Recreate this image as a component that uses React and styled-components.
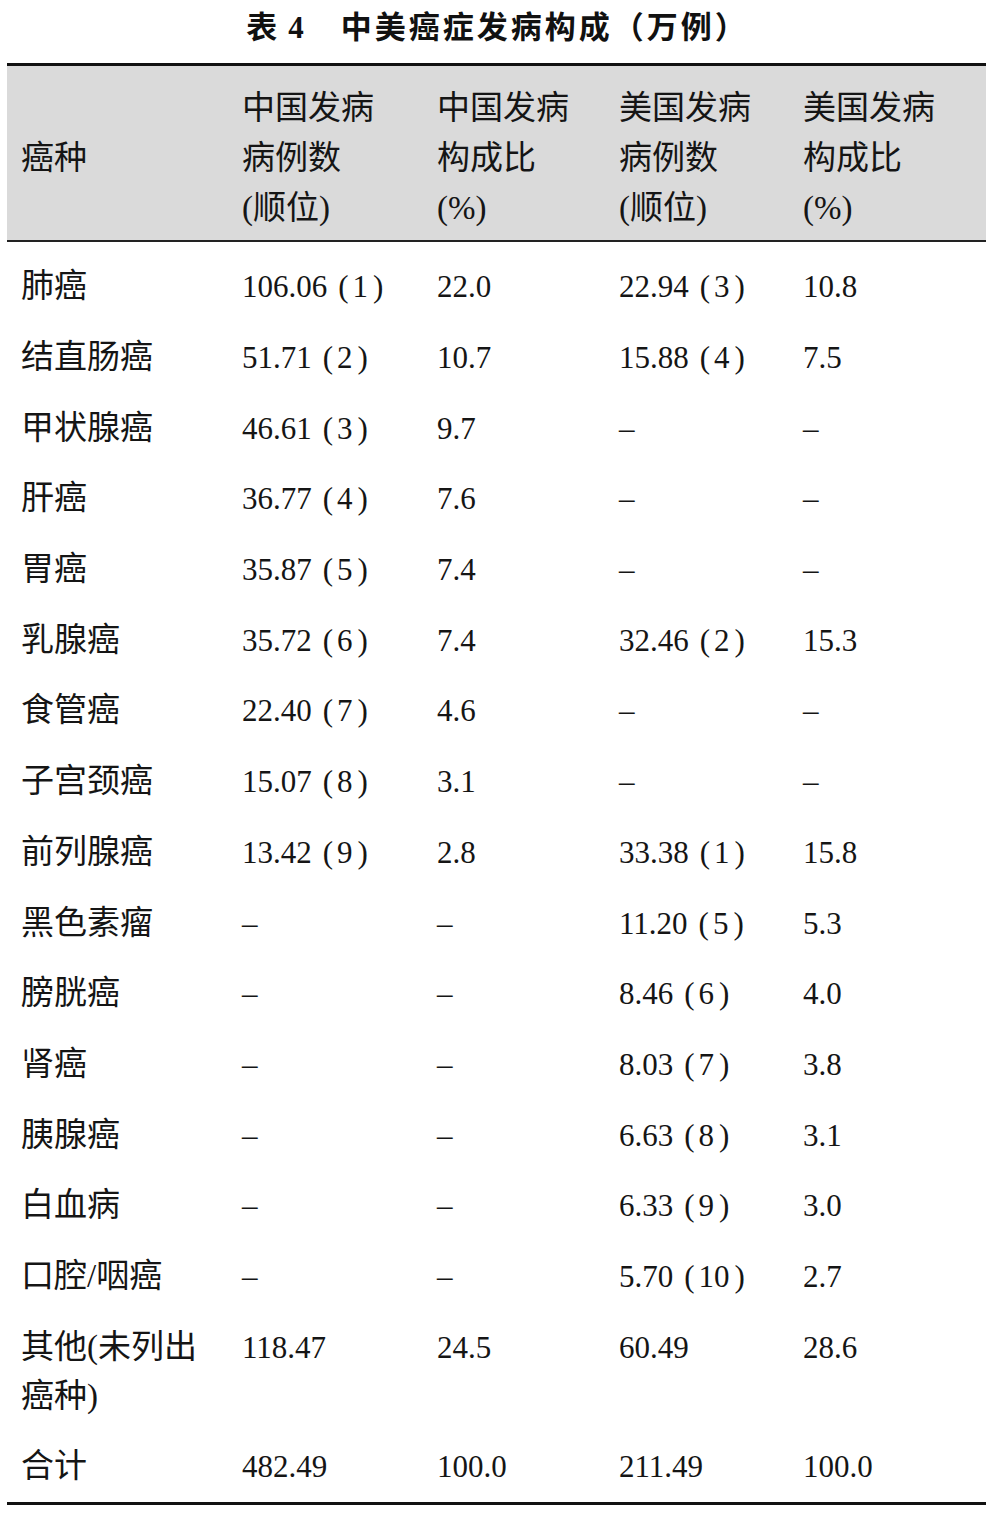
import styled, { createGlobalStyle } from 'styled-components';

const GlobalStyles = createGlobalStyle`
  body {
    margin: 0;
    background: #fff;
    color: #151515;
    font-family: "Liberation Serif", "Noto Sans CJK SC", serif;
  }
`;

const cols = '235px 195px 182px 184px 1fr';

const Page = styled.div`
  width: 979px;
  margin-left: 7px;
`;

const Title = styled.h1`
  margin: 0;
  height: 50px;
  line-height: 50px;
  text-align: center;
  font-family: "Noto Sans CJK SC", sans-serif;
  font-size: 31px;
  font-weight: 700;
  letter-spacing: 3px;
  color: #111;
  padding-left: 2px;
  b {
    font-family: "Liberation Serif", serif;
    margin: 0 34px 0 8px;
  }
`;

const Table = styled.div`
  margin-top: 13px;
  border-top: 3px solid #111;
  border-bottom: 3px solid #111;
`;

const Head = styled.div`
  display: grid;
  grid-template-columns: ${cols};
  background: #dadada;
  border-bottom: 2px solid #222;
  padding: 17px 0 7px;
`;

const HeadCell = styled.div`
  font-size: 33px;
  line-height: 50px;
  padding-left: ${p => (p.$first ? '14px' : '0')};
  align-self: ${p => (p.$first ? 'center' : 'start')};
  white-space: pre-line;
`;

const Body = styled.div`
  padding-top: 9.5px;
`;

const Row = styled.div`
  display: grid;
  grid-template-columns: ${cols};
  padding: 10.85px 0;
  line-height: 49px;
`;

const Name = styled.div`
  font-size: 33px;
  padding-left: 14px;
  padding-right: 30px;
`;

const Value = styled.div`
  font-size: 31px;
  white-space: nowrap;
`;

const Paren = styled.span`
  margin-left: ${p => (p.$close ? '5px' : '11px')};
  margin-right: ${p => (p.$close ? '0' : '4px')};
`;

const rows = [
  ['肺癌', '106.06', 1, '22.0', '22.94', 3, '10.8'],
  ['结直肠癌', '51.71', 2, '10.7', '15.88', 4, '7.5'],
  ['甲状腺癌', '46.61', 3, '9.7', '–', null, '–'],
  ['肝癌', '36.77', 4, '7.6', '–', null, '–'],
  ['胃癌', '35.87', 5, '7.4', '–', null, '–'],
  ['乳腺癌', '35.72', 6, '7.4', '32.46', 2, '15.3'],
  ['食管癌', '22.40', 7, '4.6', '–', null, '–'],
  ['子宫颈癌', '15.07', 8, '3.1', '–', null, '–'],
  ['前列腺癌', '13.42', 9, '2.8', '33.38', 1, '15.8'],
  ['黑色素瘤', '–', null, '–', '11.20', 5, '5.3'],
  ['膀胱癌', '–', null, '–', '8.46', 6, '4.0'],
  ['肾癌', '–', null, '–', '8.03', 7, '3.8'],
  ['胰腺癌', '–', null, '–', '6.63', 8, '3.1'],
  ['白血病', '–', null, '–', '6.33', 9, '3.0'],
  ['口腔/咽癌', '–', null, '–', '5.70', 10, '2.7'],
  ['其他(未列出癌种)', '118.47', null, '24.5', '60.49', null, '28.6'],
  ['合计', '482.49', null, '100.0', '211.49', null, '100.0'],
];

const Count = ({ value, rank }) => (
  <Value>
    {value}
    {rank != null && (
      <>
        <Paren>(</Paren>{rank}<Paren $close>)</Paren>
      </>
    )}
  </Value>
);

const App = () => (
  <Page>
    <GlobalStyles />
    <Title>表<b>4</b>中美癌症发病构成（万例）</Title>
    <Table>
      <Head>
        <HeadCell $first>癌种</HeadCell>
        <HeadCell>{'中国发病\n病例数\n(顺位)'}</HeadCell>
        <HeadCell>{'中国发病\n构成比\n(%)'}</HeadCell>
        <HeadCell>{'美国发病\n病例数\n(顺位)'}</HeadCell>
        <HeadCell>{'美国发病\n构成比\n(%)'}</HeadCell>
      </Head>
      <Body>
        {rows.map(r => (
          <Row key={r[0]}>
            <Name>{r[0]}</Name>
            <Count value={r[1]} rank={r[2]} />
            <Value>{r[3]}</Value>
            <Count value={r[4]} rank={r[5]} />
            <Value>{r[6]}</Value>
          </Row>
        ))}
      </Body>
    </Table>
  </Page>
);

export default App;
